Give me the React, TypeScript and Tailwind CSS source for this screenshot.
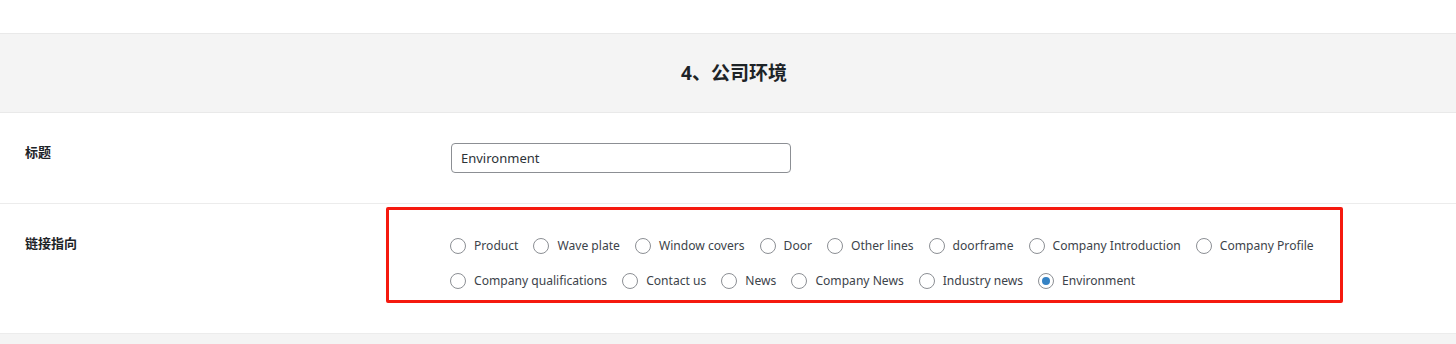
import { useState } from 'react';

const LINKS = [
  'Product', 'Wave plate', 'Window covers', 'Door', 'Other lines', 'doorframe', 'Company Introduction', 'Company Profile',
  'Company qualifications', 'Contact us', 'News', 'Company News', 'Industry news', 'Environment',
];

const FONT = "font-['Noto_Sans','Noto_Sans_CJK_SC',sans-serif]";

function Radio({ label, checked, onPick }: { label: string; checked: boolean; onPick: () => void }) {
  return (
    <label className="flex items-center gap-2 mr-[15px] cursor-pointer" onClick={onPick}>
      <span className="w-4 h-4 rounded-full border border-[#8c8f94] bg-white flex items-center justify-center">
        {checked && <span className="w-2 h-2 rounded-full bg-[#3582c4]" />}
      </span>
      <span className="text-[12.1px] leading-5 text-[#3c434a]">{label}</span>
    </label>
  );
}

export default function App() {
  const [link, setLink] = useState('Environment');

  return (
    <div className={`${FONT} w-[1456px] h-[344px] overflow-hidden bg-white`}>
      <div className="h-[33px]" />
      <div className="h-[80px] bg-[#f4f4f4] border-y border-[#e9e9e9] flex items-center justify-center pl-[12px]">
        <h2 className="text-[19px] font-bold text-[#1d2327]">4、公司环境</h2>
      </div>

      <div className="h-[91px] flex items-start border-b border-[#ececec]">
        <div className="w-[451px] pl-[25px] pt-[29px] text-[13px] font-semibold text-[#1d2327] leading-5">标题</div>
        <input
          defaultValue="Environment"
          className="mt-[30px] w-[340px] h-[30px] px-[9px] rounded border border-[#8c8f94] text-[13px] text-[#2c3338] outline-none"
        />
      </div>

      <div className="relative h-[130px] flex items-start border-b border-[#ececec]">
        <div className="w-[450px] pl-[25px] pt-[29px] text-[13px] font-semibold text-[#1d2327] leading-5">链接指向</div>
        <div className="pt-[32px] w-[900px] flex flex-wrap gap-y-[15px]">
          {LINKS.map(l => (
            <Radio key={l} label={l} checked={link === l} onPick={() => setLink(l)} />
          ))}
        </div>
        <div className="absolute left-[386px] top-[3px] w-[957px] h-[96px] border-[3px] border-[#f5190f] rounded-[2px] pointer-events-none" />
      </div>
      <div className="h-[20px] bg-[#f4f4f4]" />
    </div>
  );
}
